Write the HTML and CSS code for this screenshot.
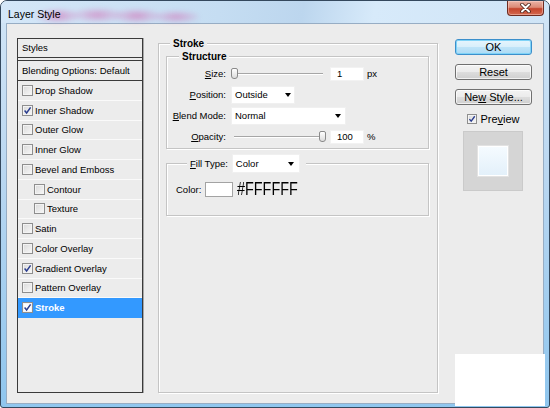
FILE: index.html
```html
<!DOCTYPE html>
<html>
<head>
<meta charset="utf-8">
<title>Layer Style</title>
<link rel="stylesheet" href="styles.css">
</head>
<body>
<div class="window">
  <div class="titlebar">
    <div class="glow"></div>
    <span class="title">Layer Style</span>
    <div class="close">
      <svg width="13" height="10" viewBox="0 0 13 10">
        <path d="M3 1.5 L10 8.5 M10 1.5 L3 8.5" stroke="#4a2018" stroke-width="3.6" stroke-linecap="round"/>
        <path d="M3 1.5 L10 8.5 M10 1.5 L3 8.5" stroke="#ffffff" stroke-width="2" stroke-linecap="round"/>
      </svg>
    </div>
  </div>
  <div class="client">
    <div class="styles-list">
      <div class="list-head">Styles</div>
      <div class="list-blend">Blending Options: Default</div>
      <div class="row"><span class="cb"></span>Drop Shadow</div>
      <div class="row"><span class="cb"><svg width="9" height="9" viewBox="0 0 9 9"><path d="M1.6 4.6 L3.6 7 L7.6 1.4" fill="none" stroke="#2a3d8f" stroke-width="1.5"/></svg></span>Inner Shadow</div>
      <div class="row"><span class="cb"></span>Outer Glow</div>
      <div class="row"><span class="cb"></span>Inner Glow</div>
      <div class="row"><span class="cb"></span>Bevel and Emboss</div>
      <div class="row sub"><span class="cb"></span>Contour</div>
      <div class="row sub"><span class="cb"></span>Texture</div>
      <div class="row"><span class="cb"></span>Satin</div>
      <div class="row"><span class="cb"></span>Color Overlay</div>
      <div class="row"><span class="cb"><svg width="9" height="9" viewBox="0 0 9 9"><path d="M1.6 4.6 L3.6 7 L7.6 1.4" fill="none" stroke="#2a3d8f" stroke-width="1.5"/></svg></span>Gradient Overlay</div>
      <div class="row"><span class="cb"></span>Pattern Overlay</div>
      <div class="row sel"><span class="cb"><svg width="9" height="9" viewBox="0 0 9 9"><path d="M1.6 4.6 L3.6 7 L7.6 1.4" fill="none" stroke="#2a3d8f" stroke-width="1.5"/></svg></span>Stroke</div>
    </div>

    <fieldset class="group stroke">
      <legend class="lg-stroke">Stroke</legend>
      <fieldset class="group structure">
        <legend class="lg-structure">Structure</legend>
        <div class="srow">
          <span class="lbl"><u>S</u>ize:</span>
          <div class="slider sl-size"><span class="thumb"></span><span class="track"></span></div>
          <div class="num num-size">1</div>
          <span class="unit">px</span>
        </div>
        <div class="srow">
          <span class="lbl"><u>P</u>osition:</span>
          <div class="select sel-pos"><span>Outside</span><span class="arrow"></span></div>
        </div>
        <div class="srow">
          <span class="lbl"><u>B</u>lend Mode:</span>
          <div class="select sel-blend"><span>Normal</span><span class="arrow"></span></div>
        </div>
        <div class="srow">
          <span class="lbl"><u>O</u>pacity:</span>
          <div class="slider sl-op"><span class="track"></span><span class="thumb"></span></div>
          <div class="num num-op">100</div>
          <span class="unit">%</span>
        </div>
      </fieldset>
      <fieldset class="group fill">
        <legend class="lg-fill"><div class="lg-inner"><span class="fill-lbl"><u>F</u>ill Type:</span><div class="select sel-fill"><span>Color</span><span class="arrow"></span></div></div></legend>
        <div class="crow">
          <span>Color:</span>
          <span class="swatch"></span>
          <span class="hex">#FFFFFF</span>
        </div>
      </fieldset>
    </fieldset>

    <div class="side">
      <div class="btn default">OK</div>
      <div class="btn">Reset</div>
      <div class="btn">Ne<u>w</u> Style...</div>
      <div class="prev"><span class="cb small"><svg width="8" height="8" viewBox="0 0 9 9"><path d="M1.6 4.6 L3.6 7 L7.6 1.4" fill="none" stroke="#2a3d8f" stroke-width="1.5"/></svg></span>Pre<u>v</u>iew</div>
      <div class="pbox"><div class="pinner"></div></div>
    </div>
  </div>
  <div class="patch"></div>
</div>
</body>
</html>
```

FILE: styles.css
```css
* { box-sizing: border-box; margin: 0; padding: 0; }
html, body { width: 550px; height: 408px; overflow: hidden; background: #ffffff; }
body { font-family: "Liberation Sans", Arial, sans-serif; font-size: 9.5px; color: #000; }

.window {
  position: relative;
  width: 550px;
  height: 408px;
  border: 1px solid #34485d;
  border-radius: 7px 7px 3px 3px;
  background: linear-gradient(to bottom, #d2e6f7 0%, #bcd8f1 40%, #8fc6ee 100%);
  display: flex;
  flex-direction: column;
  overflow: hidden;
}

.titlebar {
  position: relative;
  height: 22px;
  flex: none;
  display: flex;
  align-items: flex-start;
  background: linear-gradient(100deg, #d4e7f8 0%, #c5ddf2 40%, #bcd6ee 55%, #d7eafa 68%, #cfe4f6 100%);
}
.glow {
  position: absolute;
  left: 34px;
  top: 5px;
  width: 164px;
  height: 18px;
  background:
    radial-gradient(ellipse 24px 8px at 14% 55%, rgba(210, 100, 175, 0.6), transparent),
    radial-gradient(ellipse 28px 8px at 38% 50%, rgba(210, 100, 175, 0.55), transparent),
    radial-gradient(ellipse 26px 8px at 62% 55%, rgba(210, 100, 175, 0.58), transparent),
    radial-gradient(ellipse 26px 7px at 86% 60%, rgba(210, 100, 175, 0.52), transparent);
  filter: blur(2px);
}
.title {
  position: relative;
  font-size: 10.5px;
  line-height: 12px;
  padding: 7px 0 0 7px;
  color: #000;
}
.close {
  margin-left: auto;
  margin-right: 5px;
  width: 37px;
  height: 15px;
  border: 1px solid #6e2b20;
  border-top: none;
  border-radius: 0 0 4px 4px;
  background: linear-gradient(to bottom, #ebb3a6 0%, #dc8a76 45%, #c5452d 55%, #d4694f 100%);
  box-shadow: inset 0 0 0 1px rgba(255, 220, 210, 0.45);
  display: flex;
  align-items: center;
  justify-content: center;
}
.close svg { display: block; }

.client {
  flex: none;
  height: 381px;
  margin: 0 5px;
  border: 1px solid #97adc4;
  background: #ececec;
  padding: 14px 0 0 10px;
  display: flex;
  align-items: flex-start;
}

/* left list */
.styles-list {
  flex: none;
  width: 126px;
  height: 355px;
  border: 1px solid #3a3a3a;
  box-shadow: 1px 0 0 #a8a8a8;
  background: #ececec;
}
.list-head {
  height: 19px;
  line-height: 18px;
  padding-left: 4px;
  border-bottom: 1px solid #3a3a3a;
}
.list-blend {
  margin-top: 2px;
  height: 21px;
  line-height: 19px;
  padding-left: 4px;
  border-top: 1px solid #3a3a3a;
  border-bottom: 1px solid #3a3a3a;
}
.row {
  height: 19.75px;
  display: flex;
  align-items: center;
  padding-left: 4px;
  border-bottom: 1px solid #fafafa;
  white-space: nowrap;
}
.row.sub { padding-left: 16px; }
.row.sel { background: #3399ff; color: #fff; font-weight: bold; border-bottom-color: #3399ff; }

.cb {
  flex: none;
  width: 11px;
  height: 11px;
  margin-right: 2px;
  border: 1px solid #8e8e8e;
  background: linear-gradient(135deg, #d9d9d9 0%, #f8f8f8 100%);
  box-shadow: inset 0 0 0 1px #f3f3f3;
  display: flex;
  align-items: center;
  justify-content: center;
}
.row.sel .cb { background: #fdfdfd; }
.cb svg { display: block; }
.cb.small { width: 10px; height: 10px; margin-right: 3px; }

/* group boxes */
.group {
  border: 1px solid #c4c4c4;
  box-shadow: inset 1px 1px 0 #ffffff, 1px 1px 0 #ffffff;
}
.group > legend {
  background: #ececec;
  padding: 0 3px;
}
.stroke {
  flex: none;
  width: 280px;
  height: 355px;
  margin-left: 15px;
  padding: 2px 8px 0 7px;
}
.lg-stroke { margin-left: 4px; font-weight: bold; font-size: 10px; line-height: 11px; }

.structure { width: 263px; padding: 1px 0 1px 0; }
.lg-structure { margin-left: 12px; font-weight: bold; font-size: 10px; line-height: 11px; }

.srow { height: 21px; display: flex; align-items: center; }
.lbl { flex: none; width: 62px; text-align: right; padding-right: 3px; white-space: nowrap; }

.slider { flex: none; width: 92px; height: 12px; display: flex; align-items: center; }
.sl-size { margin-left: 2px; }
.sl-op { margin-left: 5px; }
.track {
  flex: 1;
  height: 2px;
  border-top: 1px solid #a6a6a6;
  border-bottom: 1px solid #ffffff;
}
.thumb {
  flex: none;
  width: 7px;
  height: 11px;
  border: 1px solid #8a8a8a;
  border-radius: 2px 2px 3px 3px;
  background: linear-gradient(to bottom, #ffffff, #dcdcdc);
}
.num {
  flex: none;
  width: 34px;
  height: 14px;
  line-height: 12px;
  padding-left: 6px;
  background: #fff;
  border: 1px solid #f2f2f2;
}
.num-size { margin-left: 7px; }
.num-op { margin-left: 4px; }
.unit { margin-left: 3px; }

.select {
  flex: none;
  height: 18px;
  background: #fff;
  border: 1px solid #f0f0f0;
  display: flex;
  align-items: center;
  justify-content: space-between;
  padding: 0 3px 0 3px;
}
.arrow {
  width: 0;
  height: 0;
  border-left: 3.5px solid transparent;
  border-right: 3.5px solid transparent;
  border-top: 4px solid #000;
}
.sel-pos { margin-left: 2px; width: 64px; }
.sel-blend { margin-left: 2px; width: 115px; padding-right: 4px; }

.fill { width: 263px; margin-top: 5px; padding: 0 0 18px 9px; }
.lg-fill { margin-left: 11px; padding: 0 6px 0 3px !important; }
.lg-inner { display: flex; align-items: center; height: 19px; }
.fill-lbl { margin-right: 4px; white-space: nowrap; }
.sel-fill { width: 68px; height: 19px; padding-right: 5px; }

.crow { display: flex; align-items: center; height: 15px; margin-top: 9px; }
.swatch { width: 28px; height: 15px; border: 1px solid #a3a3a3; background: #fff; margin-left: 4px; }
.hex {
  display: inline-block;
  margin-left: 4px;
  font-family: "Liberation Sans", sans-serif;
  font-size: 18px;
  line-height: 15px;
  transform: scaleX(0.8);
  transform-origin: left center;
}

/* right column */
.side { flex: none; width: 77px; margin-left: 17px; margin-top: 1px; display: flex; flex-direction: column; }
.btn {
  height: 16px;
  border: 1px solid #707070;
  border-radius: 3px;
  background: linear-gradient(to bottom, #f3f3f3 0%, #ebebeb 50%, #dddddd 51%, #cfcfcf 100%);
  box-shadow: inset 0 0 0 1px rgba(255, 255, 255, 0.7);
  font-size: 11px;
  line-height: 14px;
  text-align: center;
  white-space: nowrap;
}
.btn + .btn { margin-top: 9px; }
.btn.default {
  border-color: #3c8fcb;
  background: linear-gradient(to bottom, #e6f5fd 0%, #d8effb 50%, #bfe4f8 51%, #acdaf5 100%);
  box-shadow: inset 0 0 0 1px #7fd3f7;
}
.prev {
  margin-top: 6px;
  height: 15px;
  display: flex;
  align-items: center;
  justify-content: center;
  font-size: 11px;
}
.pbox {
  margin: 5px 0 0 8px;
  width: 60px;
  height: 60px;
  border: 1px solid #cacaca;
  background-color: #dcdcdc;
  background-image: radial-gradient(#cdcdcd 0.6px, transparent 0.8px);
  background-size: 2px 2px;
  display: flex;
  align-items: center;
  justify-content: center;
}
.pinner {
  width: 30px;
  height: 30px;
  border: 1px solid #ffffff;
  background: linear-gradient(to bottom, #f5fbff, #e3f0fa);
  box-shadow: 0 0 0 1px #e2e2e2;
}

.patch {
  position: absolute;
  left: 454px;
  top: 353px;
  width: 90px;
  height: 52px;
  background: #ffffff;
}
```
